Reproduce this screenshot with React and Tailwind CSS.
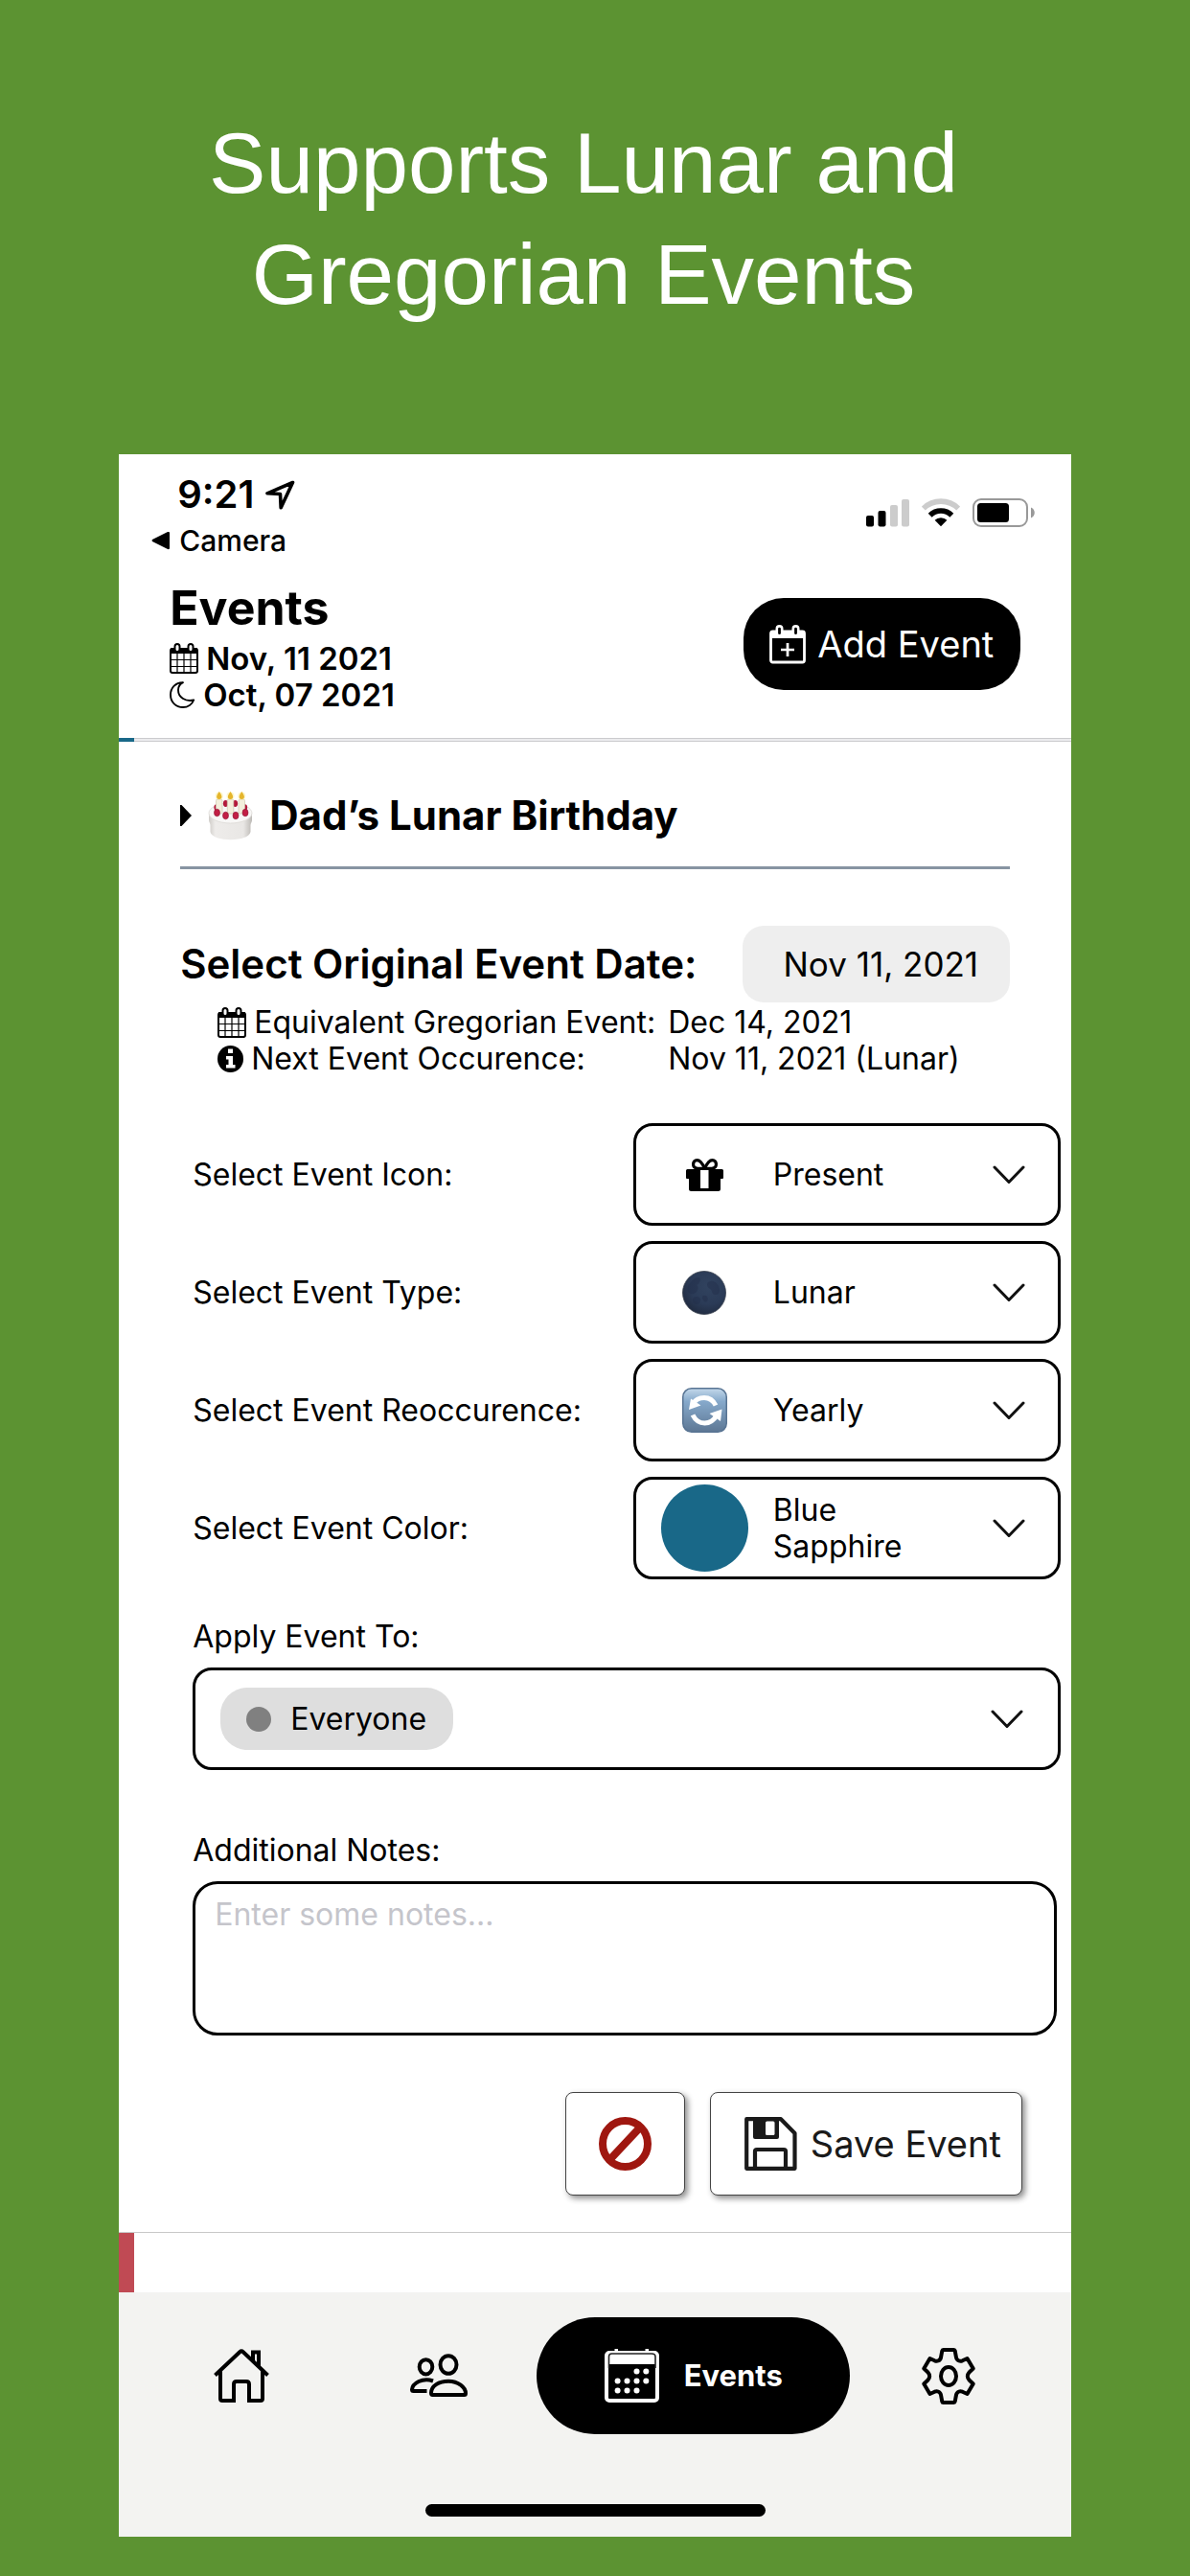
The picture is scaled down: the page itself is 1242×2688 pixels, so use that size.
import React from "react";

function CalendarIcon() {
  return (
    <svg width="30" height="32" viewBox="0 0 30 32" fill="none" stroke="#000" aria-hidden="true">
      <rect x="1" y="6" width="28" height="25" rx="2" strokeWidth="2" />
      <path d="M1 5h28v6H1z" fill="#000" stroke="none" />
      <path d="M8 11v20M15 11v20M22 11v20M1 17.5h28M1 24.5h28" strokeWidth="1.2" />
      <rect x="5.5" y="1" width="5" height="8" rx="2.5" fill="#fff" strokeWidth="2" />
      <rect x="19.5" y="1" width="5" height="8" rx="2.5" fill="#fff" strokeWidth="2" />
    </svg>
  );
}

function MoonIcon() {
  return (
    <svg width="27" height="28" viewBox="0 0 27 28" fill="none" stroke="#000" strokeWidth="1.9" strokeLinejoin="round" aria-hidden="true">
      <path d="M14 1.2C6 1 1 7 1 14c0 7.500 5.500 13 13 13 5 0 9.500-3 11.200-7.500C17 21.500 9 17 9 9c0-3.500 1.500-6 5-7.800Z" />
    </svg>
  );
}

function InfoIcon() {
  return (
    <svg width="27" height="28" viewBox="0 0 27 28" aria-hidden="true">
      <ellipse cx="13.500" cy="14" rx="13.500" ry="14" />
      <path d="M11 3.500h5v4.500h-5zM9 11h7v9h2.500v3.500H9V20h2.500v-5.500H9z" fill="#fff" />
    </svg>
  );
}

function CalendarPlusIcon() {
  return (
    <svg width="38" height="41" viewBox="0 0 38 41" fill="none" stroke="#fff" aria-hidden="true">
      <rect x="1.500" y="7" width="35" height="32" rx="2" strokeWidth="2.800" />
      <path d="M1 6h36v8H1z" fill="#fff" stroke="none" />
      <rect x="7.800" y="1.400" width="5.400" height="10" rx="2.700" fill="#000" strokeWidth="2.600" />
      <rect x="24.800" y="1.400" width="5.400" height="10" rx="2.700" fill="#000" strokeWidth="2.600" />
      <path d="M12 26h14M19 19v14" strokeWidth="2.700" />
    </svg>
  );
}

function LocationIcon() {
  return (
    <svg width="31" height="31" viewBox="0 0 31 31" fill="none" stroke="#000" strokeWidth="3.600" strokeLinejoin="round" aria-hidden="true">
      <path d="M28.500 2.500 2 13.800l13.500.7.700 14.300Z" />
    </svg>
  );
}

function SignalIcon() {
  return (
    <svg width="45" height="30" viewBox="0 0 45 30" aria-hidden="true">
      <rect x="0" y="18" width="8" height="11.500" rx="2" />
      <rect x="12.500" y="13" width="8" height="16.500" rx="2" />
      <rect x="25" y="7" width="8" height="22.500" rx="2" fill="#ccc" />
      <rect x="37" y="1" width="8" height="28.500" rx="2" fill="#ccc" />
    </svg>
  );
}

function WifiIcon() {
  return (
    <svg width="40" height="30" viewBox="0 0 40 30" fill="none" aria-hidden="true">
      <path d="M1.800 10.600a26 26 0 0 1 36.400 0" stroke="#ccc" strokeWidth="5.600" />
      <path d="M8.700 17.700a16 16 0 0 1 22.600 0" stroke="#000" strokeWidth="5.600" />
      <path d="M13.600 22.800a9 9 0 0 1 12.800 0L20 29.200Z" fill="#000" />
    </svg>
  );
}

function BatteryIcon() {
  return (
    <svg width="65" height="30" viewBox="0 0 65 30" aria-hidden="true">
      <rect x="1" y="1" width="56" height="28" rx="8" fill="none" stroke="#999" strokeWidth="2" />
      <rect x="5" y="5" width="33" height="20" rx="3.500" />
      <path d="M61 9.500c5 2 5 9 0 11z" fill="#999" />
    </svg>
  );
}

function CakeIcon() {
  return (
    <svg width="47" height="51" viewBox="0 0 47 51" aria-hidden="true">
      <defs>
        <linearGradient id="cakeSide" x1="0" x2="1" y1="0" y2="0">
          <stop offset="0" stopColor="#cfccc8" />
          <stop offset=".15" stopColor="#eeecea" />
          <stop offset=".8" stopColor="#e9e7e5" />
          <stop offset="1" stopColor="#bcb9b5" />
        </linearGradient>
      </defs>
      <path d="M1 22v8c0 2 1.500 3 1.500 5v7c2 11 40 11 42 0v-7c0-2 1.500-3 1.500-5v-8z" fill="url(#cakeSide)" />
      <ellipse cx="23.500" cy="22.500" rx="22.500" ry="10.500" fill="#f8f7f6" stroke="#dcd9d6" strokeWidth=".8" />
      <g fill="#b3193b">
        <ellipse cx="9" cy="16.500" rx="2.600" ry="3.200" />
        <ellipse cx="18.500" cy="12.500" rx="2.600" ry="3.400" />
        <ellipse cx="28.500" cy="12.500" rx="2.600" ry="3.400" />
        <ellipse cx="38.500" cy="16.500" rx="2.600" ry="3.200" />
      </g>
      <g fill="#f3efdc" stroke="#cfc9b2" strokeWidth=".7">
        <rect x="8.500" y="8" width="6.500" height="15" rx="1.500" />
        <rect x="20.300" y="8" width="6.500" height="15" rx="1.500" />
        <rect x="32" y="8" width="6.500" height="15" rx="1.500" />
      </g>
      <g fill="#fbeb7e" opacity=".4">
        <circle cx="11.800" cy="4.500" r="4" />
        <circle cx="23.500" cy="4.500" r="4" />
        <circle cx="35.300" cy="4.500" r="4" />
      </g>
      <path d="M11.800 0c4 5 3 8 0 8s-4-3 0-8zM23.500 0c4 5 3 8 0 8s-4-3 0-8zM35.300 0c4 5 3 8 0 8s-4-3 0-8z" fill="#e5b52c" />
      <g fill="#c21f45" stroke="#8e1030" strokeWidth=".6">
        <ellipse cx="9.500" cy="22" rx="3" ry="3.800" />
        <ellipse cx="18.500" cy="25" rx="3" ry="3.800" />
        <ellipse cx="29" cy="25" rx="3" ry="3.800" />
        <ellipse cx="39" cy="22" rx="3" ry="3.800" />
      </g>
    </svg>
  );
}

function GiftIcon() {
  return (
    <svg width="39" height="34" viewBox="0 0 39 34" aria-hidden="true">
      <path d="M0 12.500Q0 11 1.500 11h36Q39 11 39 12.500V20Q39 21 38 21H36V31.500Q36 34 33.500 34H5.500Q3 34 3 31.500V21H1Q0 21 0 20z" />
      <path d="M15 11.500h8.500V31H15z" fill="#fff" />
      <g fill="none" stroke="#000" strokeWidth="3.200">
        <path d="M19.500 10.500C17 4.500 14.500 1.600 11.500 1.600 6.500 1.600 6 9.500 11.500 10.200Z" strokeLinejoin="round" />
        <path d="M19.500 10.500C22 4.500 24.500 1.600 27.500 1.600 32.500 1.600 33 9.500 27.500 10.200Z" strokeLinejoin="round" />
      </g>
    </svg>
  );
}

function NewMoonIcon() {
  return (
    <svg width="46" height="46" viewBox="0 0 46 46" aria-hidden="true">
      <defs>
        <radialGradient id="moonFace" cx=".6" cy=".35" r=".7">
          <stop offset="0" stopColor="#31435f" />
          <stop offset=".6" stopColor="#2b3b57" />
          <stop offset="1" stopColor="#202b40" />
        </radialGradient>
      </defs>
      <circle cx="23" cy="23" r="22.500" fill="url(#moonFace)" stroke="#39404c" strokeWidth=".8" />
      <g fill="#222e4a" opacity=".45">
        <path d="M6 16c3-5 7-9 11-9 4 1 1 6-2 8 3 2 1 8-3 9-4 1-8-2-6-8z" />
        <path d="M27 12c5-3 9 0 11 4 2 5 1 9-3 9-5 0-3-5-6-6-3-2-4-5-2-7z" />
        <circle cx="15" cy="31" r="4" />
        <path d="M22 26c4-1 6 3 4 6-3 2-7-4-4-6z" />
      </g>
    </svg>
  );
}

function RepeatIcon() {
  return (
    <svg width="47" height="47" viewBox="0 0 47 47" aria-hidden="true">
      <defs>
        <linearGradient id="tileFace" x1="0" x2="0" y1="0" y2="1">
          <stop offset="0" stopColor="#c3d8ea" />
          <stop offset=".3" stopColor="#86a9cb" />
          <stop offset="1" stopColor="#5d7794" />
        </linearGradient>
      </defs>
      <rect x=".75" y=".75" width="45.500" height="45.500" rx="9" fill="url(#tileFace)" stroke="#587493" strokeWidth="1.500" />
      <g fill="none" stroke="#fff" strokeWidth="5">
        <path d="M11 17C14 12 18 10.500 23 10.500 28.500 10.500 32.500 13.500 35 18.500" />
        <path d="M11 28.500C13.500 33.500 18 37 23.500 37 29 37 33 34 36 29" />
      </g>
      <path d="M9 11.500 7 23l12.500-4.500zM41.500 22.500 40 35 28.500 27z" fill="#fff" />
    </svg>
  );
}

function Chevron() {
  return (
    <svg width="34" height="20" viewBox="0 0 34 20" fill="none" stroke="#111" strokeWidth="3" strokeLinecap="round" strokeLinejoin="round" aria-hidden="true">
      <path d="M2 2l15 15.500L32 2" />
    </svg>
  );
}

function BanIcon() {
  return (
    <svg width="55" height="56" viewBox="0 0 55 56" fill="none" stroke="#9f1710" strokeWidth="8" aria-hidden="true">
      <ellipse cx="27.500" cy="28" rx="23.500" ry="24" />
      <path d="M12 44 42 12" />
    </svg>
  );
}

function SaveIcon() {
  return (
    <svg width="55" height="56" viewBox="0 0 55 56" fill="none" stroke="#1a1a1a" strokeWidth="4.200" strokeLinejoin="round" aria-hidden="true">
      <path d="M2.200 2.200H38L52.500 17V53.800H2.200Z" />
      <path d="M9 2h27v19q0 2-2 2H11q-2 0-2-2z" fill="#1a1a1a" stroke="none" />
      <rect x="22" y="4.500" width="9.500" height="14.500" rx="1.500" fill="#fff" stroke="none" />
      <path d="M11 54V36q0-2 2-2h28q2 0 2 2v18" />
    </svg>
  );
}

function HomeIcon() {
  return (
    <svg width="58" height="57" viewBox="0 0 58 57" fill="none" stroke="#000" strokeWidth="4" aria-hidden="true">
      <path d="M1.500 27.500 27.500 3q1.500-1.500 3 0L56.500 27.500" />
      <path d="M7 23v29q0 2 2 2H21V37q0-3 3-3H34q3 0 3 3V54H49q2 0 2-2V23" />
      <path d="M41 12.500V3.500h6V18" />
    </svg>
  );
}

function PeopleIcon() {
  return (
    <svg width="60" height="46" viewBox="0 0 60 46" fill="none" stroke="#000" strokeWidth="4" aria-hidden="true">
      <ellipse cx="40" cy="11.500" rx="8.500" ry="9.300" />
      <ellipse cx="16.500" cy="13.800" rx="6.800" ry="7.600" />
      <path d="M22 41C22 33.500 30 28.800 40 28.800S58 35 58 41.500Q58 43 56.500 43H23.500Q22 43 22 41Z" />
      <path d="M24 28.500C13 24.500 2.500 31 2 37.500Q2 39 3.500 39H17.500" />
    </svg>
  );
}

function EventsIcon() {
  return (
    <svg width="57" height="56" viewBox="0 0 57 56" aria-hidden="true">
      <rect x="2" y="4" width="53" height="50" rx="3" fill="none" stroke="#fff" strokeWidth="4" />
      <path d="M10.500 0h3.500v5h-3.500zM42.500 0H46v5h-3.500zM4 6h49v10H4z" fill="#fff" />
      <path d="M4.500 20V8q0-3 3-3H49q4 0 4 3v12" fill="none" stroke="#222" strokeWidth="1.600" />
      <g fill="#fff">
        <circle cx="33.500" cy="23.500" r="3" />
        <circle cx="43.300" cy="23.500" r="3" />
        <circle cx="13.600" cy="33.500" r="3" />
        <circle cx="23.500" cy="33.500" r="3" />
        <circle cx="33.500" cy="33.500" r="3" />
        <circle cx="43.300" cy="33.500" r="3" />
        <circle cx="13.600" cy="43.500" r="3" />
        <circle cx="23.500" cy="43.500" r="3" />
        <circle cx="33.500" cy="43.500" r="3" />
      </g>
    </svg>
  );
}

function GearIcon() {
  return (
    <svg width="56" height="59" viewBox="0 0 56 59" fill="none" stroke="#000" strokeWidth="4" strokeLinejoin="round" aria-hidden="true">
      <path d="M22.500 2h11q1 0 1.200 1L36 10q.5 2.500 3 3.500 1.500.6 3.500-.2L47.500 11 53.700 21.500 49.500 25.500Q47.800 27.500 47.800 29.500T49.500 33.500L53.700 37.500 47.500 48 42.500 45.700Q40.500 44.900 39 45.500 36.500 46.500 36 49L34.700 56Q34.500 57 33.500 57h-11q-1 0-1.200-1L20 49Q19.500 46.500 17 45.500 15.500 44.900 13.500 45.700L8.500 48 2.300 37.500 6.500 33.500Q8.200 31.500 8.200 29.500T6.500 25.500L2.300 21.500 8.500 11l5 2.300q2 .8 3.500.2 2.500-1 3-3.500L21.300 3q.2-1 1.200-1Z" />
      <ellipse cx="28" cy="29.500" rx="8" ry="9.500" />
    </svg>
  );
}

function SelectRow({ id, label, value, icon, wrap = false }) {
  return (
    <div className="flex items-center justify-between">
      <label htmlFor={id}>{label}</label>
      <div className="relative flex h-[107px] w-[446px] items-center">
        <select
          id={id}
          defaultValue={value}
          className={
            "h-full w-full appearance-none rounded-[20px] border-[3px] border-black bg-white pr-20 pl-[143px] " +
            (wrap ? "text-transparent" : "text-black")
          }
        >
          <option>{value}</option>
        </select>
        <div className="pointer-events-none absolute inset-0 flex items-center pl-[29px]">
          <span className="flex w-[91px] justify-center">{icon}</span>
          {wrap && <span className="ml-[26px] w-44">{value}</span>}
          <span className="mr-[37px] ml-auto">
            <Chevron />
          </span>
        </div>
      </div>
    </div>
  );
}

export default function App() {
  return (
    <div className="min-h-screen bg-[#5c9332] pb-10 font-[Inter,sans-serif] text-[32px] leading-[38px] text-black">
      <h1 className="pt-28 pr-6 pb-[130px] text-center font-['Liberation_Sans',Arial,sans-serif] text-[89px] leading-[116px] text-white">
        Supports Lunar and
        <br />
        Gregorian Events
      </h1>

      <div className="mx-auto w-4/5 bg-white">
        <div className="flex items-start justify-between pt-[18px] pr-[38px] pl-[34px]">
          <div>
            <div className="flex items-center gap-3 pl-[27px] text-[40px] leading-[48px] font-semibold">
              9:21
              <LocationIcon />
            </div>
            <a href="#camera" className="mt-1 flex items-center gap-[9px] text-[30px] leading-10 font-medium">
              <svg width="20" height="20" viewBox="0 0 20 20" aria-hidden="true">
                <path d="M1 9q-1 1 0 2l16 8q2 .5 2-1V2q0-1.500-2-1z" />
              </svg>
              Camera
            </a>
          </div>
          <div className="flex gap-[13px] pt-7">
            <SignalIcon />
            <WifiIcon />
            <BatteryIcon />
          </div>
        </div>

        <header className="flex items-start justify-between px-[53px] pt-5 pb-[26px]">
          <div>
            <h2 className="text-[50px] leading-[60px] font-bold">Events</h2>
            <div className="mt-1 text-[33px] font-semibold">
              <p className="flex items-center gap-2">
                <CalendarIcon />
                Nov, 11 2021
              </p>
              <p className="flex items-center gap-2">
                <MoonIcon />
                Oct, 07 2021
              </p>
            </div>
          </div>
          <button type="button" className="mt-5 flex h-24 w-[289px] items-center justify-center gap-3 rounded-[42px] bg-black text-[38px] text-white">
            <CalendarPlusIcon />
            Add Event
          </button>
        </header>

        <div className="flex h-1">
          <div className="w-4 bg-[#196888]" />
          <div className="flex-1 border-y border-[#cbcbce] bg-[#ececee]" />
        </div>

        <main>
          <section className="px-16 pt-[52px]">
            <button type="button" className="flex w-full items-center border-b-[3px] border-[#8794a2] pb-7 text-left text-[42px] leading-[50px] font-bold">
              <svg width="12" height="22" viewBox="0 0 12 22" aria-hidden="true">
                <path d="M0 0h1.500L12 11 1.500 22H0z" />
              </svg>
              <span className="mr-[17px] ml-[17px] h-[50px]">
                <CakeIcon />
              </span>
              Dad’s Lunar Birthday
            </button>

            <div className="mt-[59px] flex items-center justify-between">
              <label htmlFor="event-date" className="text-[42px] font-semibold">
                Select Original Event Date:
              </label>
              <button id="event-date" type="button" className="h-20 w-[279px] rounded-[22px] bg-[#eeeeee] pl-[10px] text-center text-[35px]">
                Nov 11, 2021
              </button>
            </div>

            <dl className="mt-[2px] grid grid-cols-[470px_1fr] pl-[39px]">
              <dt className="flex items-center gap-2">
                <CalendarIcon />
                Equivalent Gregorian Event:
              </dt>
              <dd>Dec 14, 2021</dd>
              <dt className="flex items-center gap-2">
                <InfoIcon />
                Next Event Occurence:
              </dt>
              <dd>Nov 11, 2021 (Lunar)</dd>
            </dl>
          </section>

          <form className="mt-12 pr-[11px] pl-[77px]">
            <div className="flex flex-col gap-4">
              <SelectRow id="icon" label="Select Event Icon:" value="Present" icon={<GiftIcon />} />
              <SelectRow id="type" label="Select Event Type:" value="Lunar" icon={<NewMoonIcon />} />
              <SelectRow id="repeat" label="Select Event Reoccurence:" value="Yearly" icon={<RepeatIcon />} />
              <SelectRow
                id="color"
                label="Select Event Color:"
                value="Blue Sapphire"
                wrap
                icon={<span className="h-[91px] w-[91px] rounded-full bg-[#196888]" />}
              />
            </div>

            <label htmlFor="apply" className="mt-[41px] block">
              Apply Event To:
            </label>
            <button
              id="apply"
              type="button"
              aria-haspopup="listbox"
              className="mt-[13px] flex h-[107px] w-full items-center justify-between rounded-[20px] border-[3px] border-black pr-[36px] pl-[26px]"
            >
              <span className="flex h-[65px] items-center gap-5 rounded-[28px] bg-[#dedede] pr-7 pl-[27px]">
                <span className="h-[26px] w-[26px] rounded-full bg-[#808080]" />
                Everyone
              </span>
              <Chevron />
            </button>

            <label htmlFor="notes" className="mt-[65px] block">
              Additional Notes:
            </label>
            <div className="mt-[13px] flex pr-1">
              <textarea
                id="notes"
                placeholder="Enter some notes..."
                className="h-[161px] w-full resize-none rounded-[26px] border-[3px] border-black px-[20px] pt-[13px] placeholder:text-[#c5c5cb]"
              />
            </div>

            <div className="mt-[59px] flex justify-end gap-[26px] pr-10 text-[38px] text-[#1a1a1a]">
              <button
                type="button"
                aria-label="Cancel"
                className="flex h-[108px] w-[125px] items-center justify-center rounded-lg border border-[#444] bg-white shadow-[3px_3px_6px_rgba(0,0,0,0.45)]"
              >
                <BanIcon />
              </button>
              <button
                type="submit"
                className="flex h-[108px] w-[326px] items-center gap-[14px] rounded-lg border border-[#444] bg-white pl-[35px] shadow-[3px_3px_6px_rgba(0,0,0,0.45)]"
              >
                <SaveIcon />
                Save Event
              </button>
            </div>
          </form>
        </main>

        <div className="mt-[38px] h-[63px] border-t border-[#c8c8c8]">
          <div className="h-full w-4 bg-[#c04a54]" />
        </div>

        <footer className="bg-[#f3f3f1] pt-[26px] pb-[21px]">
          <nav className="flex items-center px-[25px]">
            <a href="#home" aria-label="Home" className="flex flex-1 justify-center">
              <HomeIcon />
            </a>
            <a href="#people" aria-label="People" className="flex flex-1 justify-center">
              <PeopleIcon />
            </a>
            <a href="#events" className="flex h-[122px] w-[327px] items-center justify-center gap-[26px] rounded-full bg-black text-[31px] font-bold text-white">
              <EventsIcon />
              Events
            </a>
            <a href="#settings" aria-label="Settings" className="flex flex-1 justify-center">
              <GearIcon />
            </a>
          </nav>
          <div className="mx-auto mt-[73px] h-[13px] w-[355px] rounded-full bg-black" />
        </footer>
      </div>
    </div>
  );
}
